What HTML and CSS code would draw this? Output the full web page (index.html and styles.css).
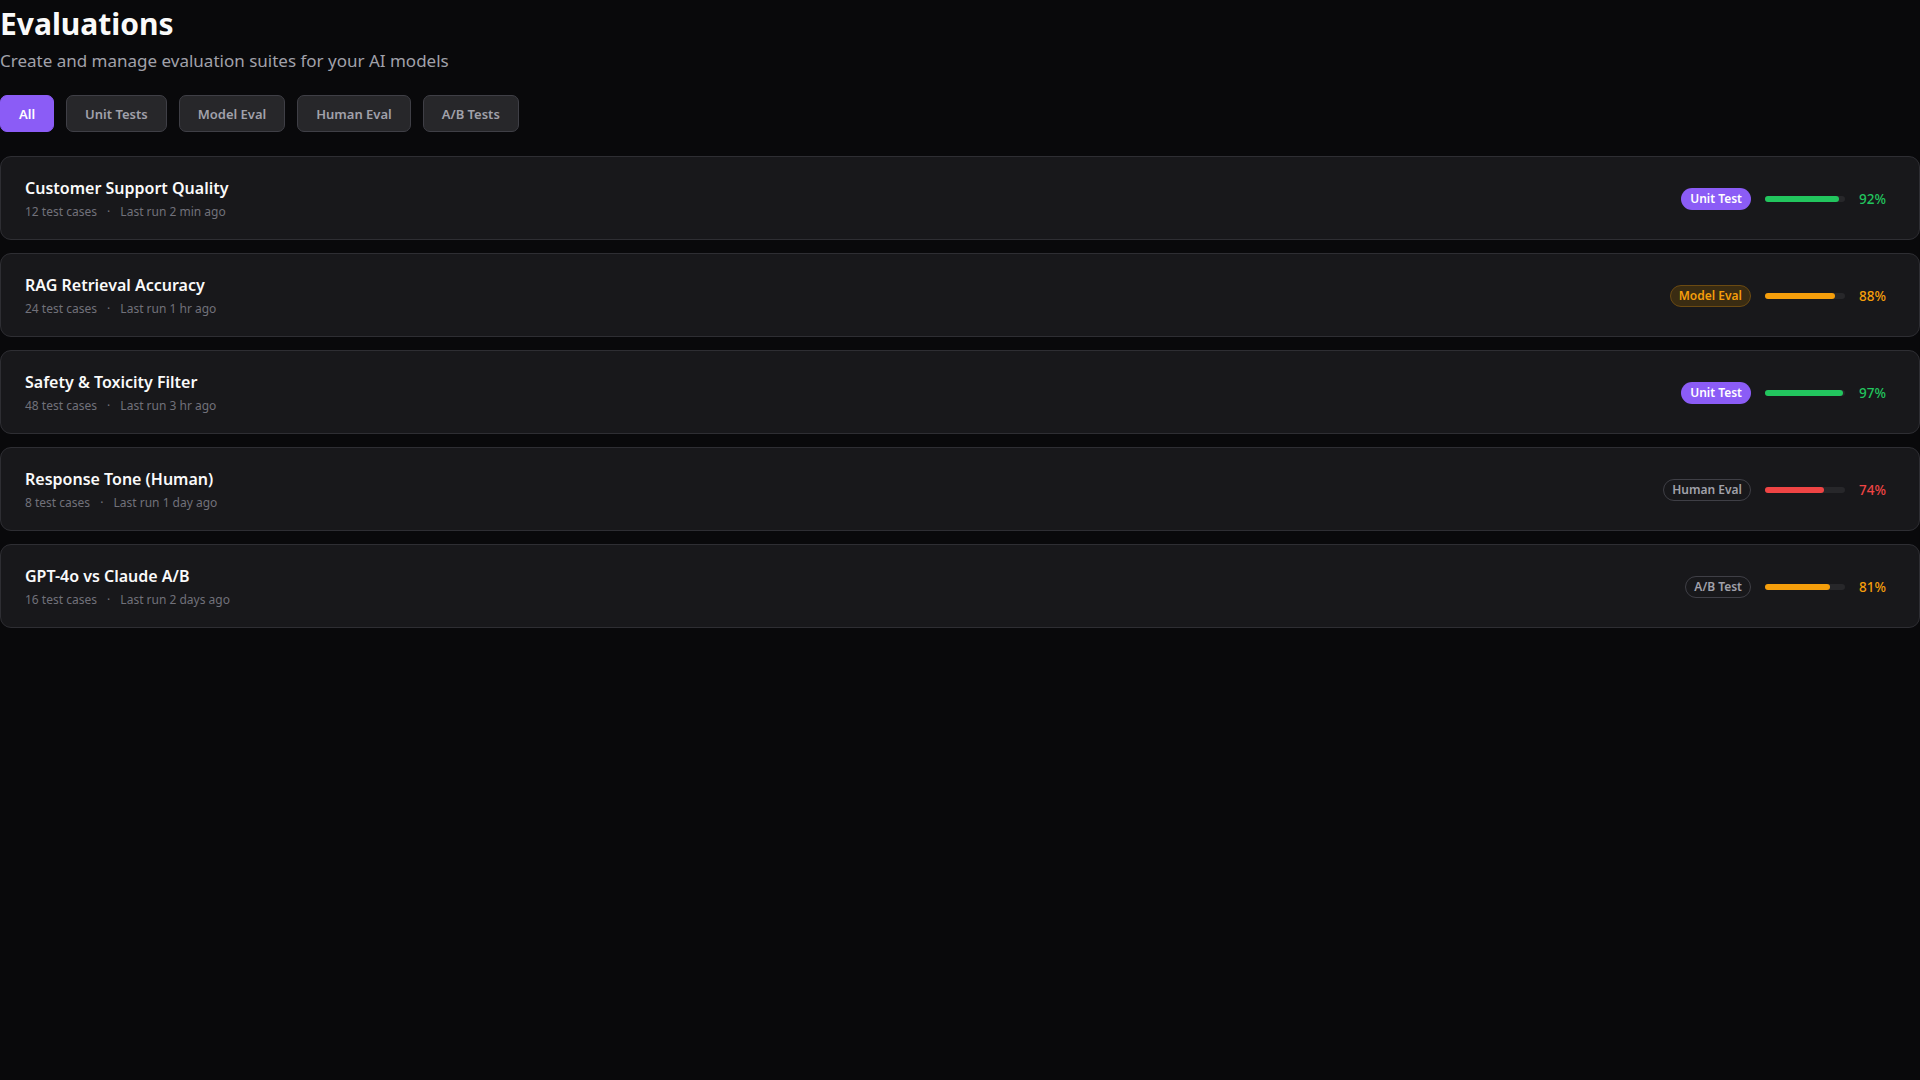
FILE: index.html
```html
<!DOCTYPE html>
<html lang="en">
<head>
    <meta charset="UTF-8">
    <meta name="viewport" content="width=device-width, initial-scale=1.0">
    <title>Evaluations</title>
    <link rel="stylesheet" href="styles.css">
</head>
<body>
    <div class="page">
        <h1>Evaluations</h1>
        <p class="subtitle">Create and manage evaluation suites for your AI models</p>

        <div class="tabs">
            <button class="tab active">All</button>
            <button class="tab">Unit Tests</button>
            <button class="tab">Model Eval</button>
            <button class="tab">Human Eval</button>
            <button class="tab">A/B Tests</button>
        </div>

        <div class="suite-list">
            <div class="suite">
                <div class="suite-info">
                    <div class="suite-name">Customer Support Quality</div>
                    <div class="suite-meta">12 test cases <span class="dot">·</span> Last run 2 min ago</div>
                </div>
                <div class="suite-stats">
                    <span class="badge unit">Unit Test</span>
                    <div class="bar"><div class="fill green" style="width: 92%"></div></div>
                    <span class="score green-text">92%</span>
                </div>
            </div>

            <div class="suite">
                <div class="suite-info">
                    <div class="suite-name">RAG Retrieval Accuracy</div>
                    <div class="suite-meta">24 test cases <span class="dot">·</span> Last run 1 hr ago</div>
                </div>
                <div class="suite-stats">
                    <span class="badge model">Model Eval</span>
                    <div class="bar"><div class="fill amber" style="width: 88%"></div></div>
                    <span class="score amber-text">88%</span>
                </div>
            </div>

            <div class="suite">
                <div class="suite-info">
                    <div class="suite-name">Safety &amp; Toxicity Filter</div>
                    <div class="suite-meta">48 test cases <span class="dot">·</span> Last run 3 hr ago</div>
                </div>
                <div class="suite-stats">
                    <span class="badge unit">Unit Test</span>
                    <div class="bar"><div class="fill green" style="width: 97%"></div></div>
                    <span class="score green-text">97%</span>
                </div>
            </div>

            <div class="suite">
                <div class="suite-info">
                    <div class="suite-name">Response Tone (Human)</div>
                    <div class="suite-meta">8 test cases <span class="dot">·</span> Last run 1 day ago</div>
                </div>
                <div class="suite-stats">
                    <span class="badge plain">Human Eval</span>
                    <div class="bar"><div class="fill red" style="width: 74%"></div></div>
                    <span class="score red-text">74%</span>
                </div>
            </div>

            <div class="suite">
                <div class="suite-info">
                    <div class="suite-name">GPT-4o vs Claude A/B</div>
                    <div class="suite-meta">16 test cases <span class="dot">·</span> Last run 2 days ago</div>
                </div>
                <div class="suite-stats">
                    <span class="badge plain">A/B Test</span>
                    <div class="bar"><div class="fill amber" style="width: 81%"></div></div>
                    <span class="score amber-text">81%</span>
                </div>
            </div>
        </div>
    </div>
</body>
</html>
```

FILE: styles.css
```css
body {
    margin: 0;
    background-color: #09090b;
    color: #fafafa;
    font-family: "Noto Sans", "Open Sans", sans-serif;
}
.page {
    padding-top: 3px;
}
h1 {
    margin: 0;
    font-size: 30px;
    font-weight: 700;
    line-height: 42px;
}
.subtitle {
    margin: 4px 0 0 0;
    font-size: 17px;
    line-height: 24px;
    color: #a1a1aa;
}
.tabs {
    display: flex;
    gap: 12px;
    margin-top: 22px;
    margin-bottom: 24px;
}
.tab {
    font-family: inherit;
    font-size: 13px;
    font-weight: 600;
    color: #a1a1aa;
    background-color: #27272a;
    border: 1px solid #3f3f46;
    border-radius: 7px;
    height: 37px;
    padding: 0 18px;
    cursor: pointer;
}
.tab.active {
    background-color: #8b5cf6;
    border-color: #8b5cf6;
    color: #fff;
}
.suite-list {
    display: flex;
    flex-direction: column;
    gap: 13px;
}
.suite {
    display: flex;
    align-items: center;
    justify-content: space-between;
    background-color: #18181b;
    border: 1px solid #2e2e33;
    border-radius: 11px;
    padding: 19px 24px 18px 24px;
}
.suite-name {
    font-size: 16px;
    font-weight: 600;
    line-height: 24px;
    color: #fafafa;
}
.suite-meta {
    margin-top: 3px;
    font-size: 12px;
    line-height: 18px;
    color: #71717a;
}
.dot {
    margin: 0 7px;
}
.suite-stats {
    display: flex;
    align-items: center;
    gap: 14px;
}
.badge {
    font-size: 12px;
    font-weight: 600;
    line-height: 20px;
    padding: 0 8px;
    border-radius: 11px;
    border: 1px solid transparent;
}
.badge.unit {
    background-color: #8b5cf6;
    color: #fff;
}
.badge.model {
    background-color: #3a2c12;
    border-color: #6b4a12;
    color: #f59e0b;
}
.badge.plain {
    border-color: #3f3f46;
    color: #a1a1aa;
}
.bar {
    width: 80px;
    height: 6px;
    border-radius: 3px;
    background-color: #27272a;
}
.fill {
    height: 100%;
    border-radius: 3px;
}
.fill.green { background-color: #22c55e; }
.fill.amber { background-color: #f59e0b; }
.fill.red { background-color: #ef4444; }
.score {
    width: 36px;
    font-size: 13.5px;
    font-weight: 500;
}
.green-text { color: #22c55e; }
.amber-text { color: #f59e0b; }
.red-text { color: #ef4444; }
```
